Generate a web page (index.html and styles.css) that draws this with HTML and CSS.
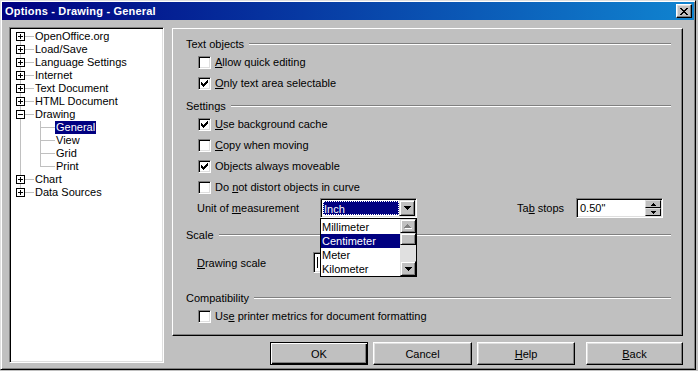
FILE: index.html
```html
<!DOCTYPE html>
<html lang="en">
<head>
    <meta charset="UTF-8">
    <title>Options - Drawing - General</title>
    <link rel="stylesheet" href="styles.css">
</head>
<body>
    <div class="window">
        <div class="titlebar">
            <span class="title">Options - Drawing - General</span>
            <span class="close">
                <svg width="8" height="7" viewBox="0 0 8 7"><path d="M0 0h2v1H0zM6 0h2v1H6zM1 1h2v1H1zM5 1h2v1H5zM2 2h4v1H2zM3 3h2v1H3zM2 4h4v1H2zM1 5h2v1H1zM5 5h2v1H5zM0 6h2v1H0zM6 6h2v1H6z" fill="#000"/></svg>
            </span>
        </div>

        <div class="content">
            <!-- Category tree -->
            <div class="tree">
                <div class="node first"><span class="exp"><svg width="9" height="9" viewBox="0 0 9 9"><rect x="0.5" y="0.5" width="8" height="8" fill="#fff" stroke="#000"/><path d="M2 4h5v1H2zM4 2h1v5H4z" fill="#000"/></svg></span><span class="twig"></span><span class="label">OpenOffice.org</span></div>
                <div class="node"><span class="exp"><svg width="9" height="9" viewBox="0 0 9 9"><rect x="0.5" y="0.5" width="8" height="8" fill="#fff" stroke="#000"/><path d="M2 4h5v1H2zM4 2h1v5H4z" fill="#000"/></svg></span><span class="twig"></span><span class="label">Load/Save</span></div>
                <div class="node"><span class="exp"><svg width="9" height="9" viewBox="0 0 9 9"><rect x="0.5" y="0.5" width="8" height="8" fill="#fff" stroke="#000"/><path d="M2 4h5v1H2zM4 2h1v5H4z" fill="#000"/></svg></span><span class="twig"></span><span class="label">Language Settings</span></div>
                <div class="node"><span class="exp"><svg width="9" height="9" viewBox="0 0 9 9"><rect x="0.5" y="0.5" width="8" height="8" fill="#fff" stroke="#000"/><path d="M2 4h5v1H2zM4 2h1v5H4z" fill="#000"/></svg></span><span class="twig"></span><span class="label">Internet</span></div>
                <div class="node"><span class="exp"><svg width="9" height="9" viewBox="0 0 9 9"><rect x="0.5" y="0.5" width="8" height="8" fill="#fff" stroke="#000"/><path d="M2 4h5v1H2zM4 2h1v5H4z" fill="#000"/></svg></span><span class="twig"></span><span class="label">Text Document</span></div>
                <div class="node"><span class="exp"><svg width="9" height="9" viewBox="0 0 9 9"><rect x="0.5" y="0.5" width="8" height="8" fill="#fff" stroke="#000"/><path d="M2 4h5v1H2zM4 2h1v5H4z" fill="#000"/></svg></span><span class="twig"></span><span class="label">HTML Document</span></div>
                <div class="node"><span class="exp"><svg width="9" height="9" viewBox="0 0 9 9"><rect x="0.5" y="0.5" width="8" height="8" fill="#fff" stroke="#000"/><path d="M2 4h5v1H2z" fill="#000"/></svg></span><span class="twig"></span><span class="label">Drawing</span></div>
                <div class="node child"><span class="twig long"></span><span class="label sel">General</span></div>
                <div class="node child"><span class="twig long"></span><span class="label">View</span></div>
                <div class="node child"><span class="twig long"></span><span class="label">Grid</span></div>
                <div class="node child last"><span class="twig long"></span><span class="label">Print</span></div>
                <div class="node"><span class="exp"><svg width="9" height="9" viewBox="0 0 9 9"><rect x="0.5" y="0.5" width="8" height="8" fill="#fff" stroke="#000"/><path d="M2 4h5v1H2zM4 2h1v5H4z" fill="#000"/></svg></span><span class="twig"></span><span class="label">Chart</span></div>
                <div class="node last"><span class="exp"><svg width="9" height="9" viewBox="0 0 9 9"><rect x="0.5" y="0.5" width="8" height="8" fill="#fff" stroke="#000"/><path d="M2 4h5v1H2zM4 2h1v5H4z" fill="#000"/></svg></span><span class="twig"></span><span class="label">Data Sources</span></div>
            </div>

            <div class="side">
                <!-- Options page -->
                <div class="panel">
                    <div class="group">Text objects</div>
                    <div class="check first-check"><span class="cb"></span><span><u>A</u>llow quick editing</span></div>
                    <div class="check"><span class="cb on"><svg width="7" height="7" viewBox="0 0 7 7"><path d="M0 2h1v3H0zM1 3h1v3H1zM2 4h1v3H2zM3 3h1v3H3zM4 2h1v3H4zM5 1h1v3H5zM6 0h1v3H6z" fill="#000"/></svg></span><span><u>O</u>nly text area selectable</span></div>

                    <div class="group after-check">Settings</div>
                    <div class="check first-check"><span class="cb on"><svg width="7" height="7" viewBox="0 0 7 7"><path d="M0 2h1v3H0zM1 3h1v3H1zM2 4h1v3H2zM3 3h1v3H3zM4 2h1v3H4zM5 1h1v3H5zM6 0h1v3H6z" fill="#000"/></svg></span><span><u>U</u>se background cache</span></div>
                    <div class="check"><span class="cb"></span><span><u>C</u>opy when moving</span></div>
                    <div class="check"><span class="cb on"><svg width="7" height="7" viewBox="0 0 7 7"><path d="M0 2h1v3H0zM1 3h1v3H1zM2 4h1v3H2zM3 3h1v3H3zM4 2h1v3H4zM5 1h1v3H5zM6 0h1v3H6z" fill="#000"/></svg></span><span>Ob<u>j</u>ects always moveable</span></div>
                    <div class="check"><span class="cb"></span><span>Do <u>n</u>ot distort objects in curve</span></div>

                    <div class="field-row unit-row">
                        <span class="field-label">Unit of <u>m</u>easurement</span>
                        <div class="combo">
                            <span class="combo-value"><span class="focus">Inch</span></span>
                            <span class="arrow-btn"><svg width="7" height="4" viewBox="0 0 7 4"><path d="M0 0h7v1H0zM1 1h5v1H1zM2 2h3v1H2zM3 3h1v1H3z" fill="#000"/></svg></span>
                            <div class="dropdown">
                                <div class="options">
                                    <div class="option">Millimeter</div>
                                    <div class="option sel">Centimeter</div>
                                    <div class="option">Meter</div>
                                    <div class="option">Kilometer</div>
                                </div>
                                <div class="scrollbar">
                                    <span class="arrow-btn up"><svg width="8" height="5" viewBox="0 0 8 5"><path d="M4 1h1v1H4zM3 2h3v1H3zM2 3h5v1H2zM1 4h7v1H1z" fill="#fff"/><path d="M3 0h1v1H3zM2 1h3v1H2zM1 2h5v1H1zM0 3h7v1H0z" fill="#808080"/></svg></span>
                                    <span class="thumb"></span>
                                    <span class="track"></span>
                                    <span class="arrow-btn down"><svg width="7" height="4" viewBox="0 0 7 4"><path d="M0 0h7v1H0zM1 1h5v1H1zM2 2h3v1H2zM3 3h1v1H3z" fill="#000"/></svg></span>
                                </div>
                            </div>
                        </div>
                        <span class="field-label tab-label">Ta<u>b</u> stops</span>
                        <div class="spin">
                            <span class="spin-value">0.50"</span>
                            <span class="spin-btns">
                                <span class="spin-btn"><svg width="5" height="3" viewBox="0 0 5 3"><path d="M2 0h1v1H2zM1 1h3v1H1zM0 2h5v1H0z" fill="#000"/></svg></span>
                                <span class="spin-btn"><svg width="5" height="3" viewBox="0 0 5 3"><path d="M0 0h5v1H0zM1 1h3v1H1zM2 2h1v1H2z" fill="#000"/></svg></span>
                            </span>
                        </div>
                    </div>

                    <div class="group scale-group">Scale</div>
                    <div class="field-row scale-row">
                        <span class="field-label scale-label"><u>D</u>rawing scale</span>
                        <div class="textbox"><span class="caret"></span></div>
                    </div>

                    <div class="group compat-group">Compatibility</div>
                    <div class="check first-check"><span class="cb"></span><span>Us<u>e</u> printer metrics for document formatting</span></div>
                </div>

                <div class="buttons">
                    <button class="btn default">OK</button>
                    <button class="btn cancel">Cancel</button>
                    <button class="btn help"><u>H</u>elp</button>
                    <button class="btn back"><u>B</u>ack</button>
                </div>
            </div>
        </div>
    </div>
</body>
</html>
```

FILE: styles.css
```css
body {
    margin: 0;
    background-color: #c0c0c0;
    font-family: "Liberation Sans", Arial, sans-serif;
    font-size: 11px;
    color: #000;
}

u {
    text-decoration: underline;
    text-underline-offset: 1px;
}

.window {
    width: 696px;
    height: 370px;
    box-sizing: border-box;
    padding: 1px;
    background: #c0c0c0;
    border: 1px solid;
    border-color: #dfdfdf #000 #000 #dfdfdf;
    box-shadow: inset 1px 1px #fff, inset -1px -1px #808080;
}

/* Title bar */
.titlebar {
    height: 18px;
    display: flex;
    align-items: center;
    justify-content: space-between;
    padding: 0 2px 0 3px;
    background: linear-gradient(to right, #000080, #1084d0);
}

.title {
    color: #fff;
    font-weight: bold;
    font-size: 11px;
    letter-spacing: 0.2px;
}

.close {
    width: 16px;
    height: 14px;
    box-sizing: border-box;
    display: flex;
    align-items: center;
    justify-content: center;
    background: #c0c0c0;
    border: 1px solid;
    border-color: #fff #000 #000 #fff;
    box-shadow: inset -1px -1px #808080, inset 1px 1px #dfdfdf;
}

.content {
    display: flex;
    padding: 7px 0 0 7px;
}

/* Tree */
.tree {
    width: 155px;
    height: 336px;
    box-sizing: border-box;
    padding-top: 2px;
    background: #fff;
    border: 1px solid;
    border-color: #808080 #fff #fff #808080;
    box-shadow: inset 1px 1px #000, inset -1px -1px #dfdfdf;
}

.node {
    display: flex;
    align-items: center;
    height: 13px;
    padding-left: 6px;
    background: linear-gradient(#c0c0c0, #c0c0c0) 10px 0 / 1px 100% no-repeat;
}

.node.first {
    background-position: 10px 6px;
}

.node.last {
    background-size: 1px 7px;
}

.node.child {
    padding-left: 30px;
    background:
        linear-gradient(#c0c0c0, #c0c0c0) 10px 0 / 1px 100% no-repeat,
        linear-gradient(#c0c0c0, #c0c0c0) 30px 0 / 1px 100% no-repeat;
}

.node.child.last {
    background:
        linear-gradient(#c0c0c0, #c0c0c0) 10px 0 / 1px 100% no-repeat,
        linear-gradient(#c0c0c0, #c0c0c0) 30px 0 / 1px 7px no-repeat;
}

.exp {
    width: 9px;
    height: 9px;
    display: flex;
}

.twig {
    width: 9px;
    height: 1px;
    background: #c0c0c0;
}

.twig.long {
    width: 15px;
}

.label {
    padding: 0 1px;
    line-height: 13px;
    white-space: nowrap;
}

.label.sel {
    background: #000080;
    color: #fff;
}

/* Right side */
.side {
    margin-left: 8px;
    width: 511px;
}

.panel {
    height: 308px;
    margin-top: 1px;
    box-sizing: border-box;
    padding: 8px 0 0 13px;
    border: 1px solid;
    border-color: #fff #000 #000 #fff;
    box-shadow: inset -1px -1px #808080;
}

.group {
    display: flex;
    align-items: center;
    height: 14px;
    margin-right: 11px;
}

.group::after {
    content: "";
    flex: 1;
    margin-left: 5px;
    border-top: 1px solid #808080;
    border-bottom: 1px solid #fff;
}

.group.after-check {
    margin-top: 7px;
}

.group.scale-group {
    margin-top: 10px;
}

.group.compat-group {
    margin-top: 18px;
}

.check {
    display: flex;
    align-items: center;
    height: 18px;
    margin: 3px 0 0 12px;
}

.check.first-check {
    margin-top: 2px;
}

.cb {
    width: 13px;
    height: 13px;
    box-sizing: border-box;
    margin-right: 4px;
    display: flex;
    align-items: center;
    justify-content: center;
    background: #fff;
    border: 1px solid;
    border-color: #808080 #fff #fff #808080;
    box-shadow: inset 1px 1px #000, inset -1px -1px #dfdfdf;
}

.field-row {
    display: flex;
    align-items: center;
    height: 20px;
    margin-left: 11px;
}

.unit-row {
    margin-top: 2px;
}

.scale-row {
    margin-top: 10px;
    height: 21px;
}

.field-label {
    width: 123px;
    white-space: nowrap;
}

.scale-label {
    width: 116px;
}

.tab-label {
    width: 59px;
    margin-left: 100px;
}

/* Combo box with open list */
.combo {
    position: relative;
    width: 97px;
    height: 20px;
    box-sizing: border-box;
    display: flex;
    padding: 2px;
    background: #fff;
    border: 1px solid;
    border-color: #808080 #fff #fff #808080;
    box-shadow: inset 1px 1px #000, inset -1px -1px #dfdfdf;
}

.combo-value {
    flex: 1;
    display: flex;
    background: #000080;
    color: #fff;
}

.focus {
    flex: 1;
    border: 1px dotted #fff;
    line-height: 14px;
}

.arrow-btn {
    width: 16px;
    height: 16px;
    box-sizing: border-box;
    display: flex;
    align-items: center;
    justify-content: center;
    background: #c0c0c0;
    border: 1px solid;
    border-color: #dfdfdf #000 #000 #dfdfdf;
    box-shadow: inset 1px 1px #fff, inset -1px -1px #808080;
}

.combo > .arrow-btn {
    margin: -1px -1px 0 0;
}

.dropdown {
    position: absolute;
    top: 19px;
    left: -1px;
    width: 97px;
    height: 59px;
    box-sizing: border-box;
    display: flex;
    background: #fff;
    border: 1px solid #000;
    z-index: 2;
}

.options {
    flex: 1;
    padding-top: 1px;
}

.option {
    height: 14px;
    line-height: 14px;
    padding-left: 1px;
}

.option.sel {
    background: #000080;
    color: #fff;
}

.scrollbar {
    width: 16px;
    display: flex;
    flex-direction: column;
    background: #e0e0e0;
}

.scrollbar .arrow-btn.up {
    height: 14px;
}

.scrollbar .arrow-btn.down {
    height: 15px;
}

.thumb {
    height: 12px;
    box-sizing: border-box;
    background: #c0c0c0;
    border: 1px solid;
    border-color: #dfdfdf #000 #000 #dfdfdf;
    box-shadow: inset 1px 1px #fff, inset -1px -1px #808080;
}

.track {
    flex: 1;
}

/* Spin field */
.spin {
    width: 87px;
    height: 20px;
    box-sizing: border-box;
    display: flex;
    align-items: center;
    padding: 2px 1px 2px 3px;
    background: #fff;
    border: 1px solid;
    border-color: #808080 #fff #fff #808080;
    box-shadow: inset 1px 1px #000, inset -1px -1px #dfdfdf;
}

.spin-value {
    flex: 1;
}

.spin-btns {
    display: flex;
    flex-direction: column;
    width: 16px;
}

.spin-btn {
    height: 8px;
    box-sizing: border-box;
    display: flex;
    align-items: center;
    justify-content: center;
    background: #c0c0c0;
    border: 1px solid;
    border-color: #dfdfdf #000 #000 #dfdfdf;
}

.textbox {
    width: 90px;
    height: 21px;
    box-sizing: border-box;
    padding: 4px 0 0 3px;
    background: #fff;
    border: 1px solid;
    border-color: #808080 #fff #fff #808080;
    box-shadow: inset 1px 1px #000, inset -1px -1px #dfdfdf;
}

.caret {
    display: block;
    width: 1px;
    height: 11px;
    background: #000;
}

/* Buttons */
.buttons {
    display: flex;
    gap: 5px;
    margin-top: 6px;
    padding-left: 98px;
}

.btn {
    width: 98px;
    height: 23px;
    box-sizing: border-box;
    padding: 0;
    font-family: "Liberation Sans", Arial, sans-serif;
    font-size: 11px;
    color: #000;
    background: #c0c0c0;
    border: 1px solid;
    border-color: #fff #000 #000 #fff;
    box-shadow: inset -1px -1px #808080, inset 1px 1px #dfdfdf;
}

.btn.default {
    border-color: #000;
    box-shadow: inset 1px 1px #fff, inset -1px -1px #000, inset -2px -2px #808080;
}

.btn.cancel {
    width: 99px;
}

.btn.back {
    width: 97px;
    margin-left: 6px;
}
```
